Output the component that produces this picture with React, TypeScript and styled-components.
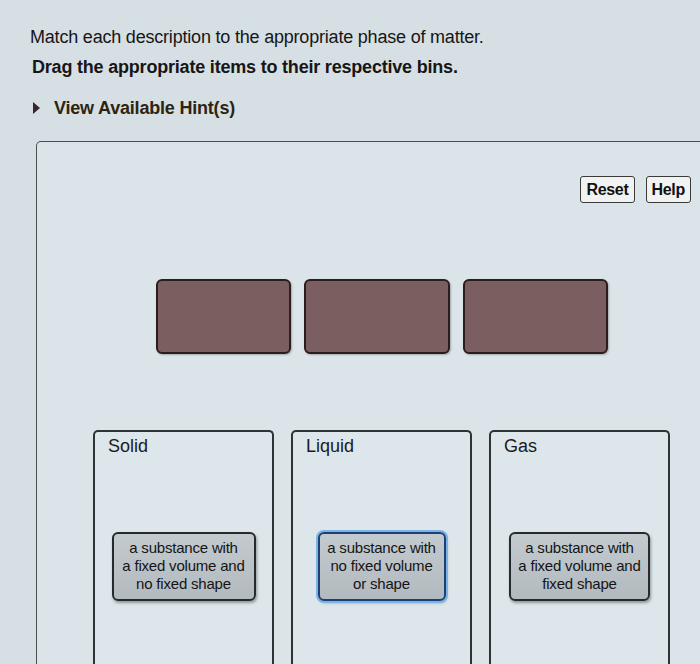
import React from "react";
import styled, { createGlobalStyle } from "styled-components";

const Global = createGlobalStyle`
  html, body { margin: 0; padding: 0; }
  body {
    width: 700px;
    height: 664px;
    overflow: hidden;
    background: #d6dfe3;
    font-family: "Liberation Sans", Arial, Helvetica, sans-serif;
    color: #161616;
  }
`;

const Page = styled.div`
  padding: 26px 0 0 30px;
  height: 664px;
  box-sizing: border-box;
  display: flex;
  flex-direction: column;
`;

const Instruction = styled.p<{ $bold?: boolean }>`
  margin: 0 0 ${(p) => (p.$bold ? "19px" : "8px")} ${(p) => (p.$bold ? "2px" : "0")};
  font-size: 18px;
  line-height: 22px;
  font-weight: ${(p) => (p.$bold ? 700 : 400)};
  letter-spacing: -0.2px;
`;

const HintToggle = styled.div`
  display: flex;
  align-items: center;
  gap: 14px;
  margin-left: 3px;
  font-size: 18px;
  line-height: 22px;
  font-weight: 700;
  color: #2e2410;
  letter-spacing: -0.2px;
`;

const Triangle = styled.span`
  width: 0;
  height: 0;
  border-top: 6px solid transparent;
  border-bottom: 6px solid transparent;
  border-left: 7px solid #3b2430;
`;

const Panel = styled.div`
  margin: 22px 0 0 6px;
  width: 690px;
  flex: 1;
  box-sizing: border-box;
  border: 1px solid #4a4f52;
  border-bottom: none;
  border-radius: 5px 5px 0 0;
  background: #dbe4e8;
  padding: 34px 34px 0 56px;
  display: flex;
  flex-direction: column;
`;

const Toolbar = styled.div`
  display: flex;
  justify-content: flex-end;
  gap: 11px;
`;

const ToolButton = styled.button`
  height: 27px;
  padding: 0 5px;
  border: 1px solid #3a3a3a;
  border-radius: 3px;
  background: #f1f3f3;
  font-family: "Liberation Sans", Arial, sans-serif;
  font-size: 16px;
  font-weight: 700;
  color: #111;
  letter-spacing: -0.3px;
`;

const TargetRow = styled.div`
  display: flex;
  gap: 13px;
  margin: 76px 0 0 63px;
`;

const Target = styled.div<{ $w: number }>`
  width: ${(p) => p.$w}px;
  height: 75px;
  box-sizing: border-box;
  background: #7b5e60;
  border: 2px solid #2b1c1e;
  border-radius: 6px;
  box-shadow: 1px 1px 2px rgba(0, 0, 0, 0.25);
`;

const BinRow = styled.div`
  display: flex;
  gap: 17px;
  margin-top: 76px;
  flex: 1;
`;

const Bin = styled.div`
  width: 181px;
  box-sizing: border-box;
  border: 2px solid #2f3335;
  border-bottom: none;
  border-radius: 5px 5px 0 0;
  background: #dde6ea;
  display: flex;
  flex-direction: column;
  align-items: center;
`;

const BinLabel = styled.div`
  align-self: flex-start;
  margin: 3px 0 0 13px;
  font-size: 18px;
  line-height: 22px;
  color: #1a1a1a;
`;

const Card = styled.div<{ $active?: boolean; $w: number }>`
  margin-top: 75px;
  width: ${(p) => p.$w}px;
  box-sizing: border-box;
  padding: 5px 3px 6px;
  border: 2px solid ${(p) => (p.$active ? "#1d3f73" : "#262a2c")};
  border-radius: 6px;
  background: linear-gradient(#c4cbcf, #b2babf);
  box-shadow: ${(p) =>
    p.$active
      ? "0 0 0 2px #79b4e4, 1px 2px 3px rgba(0,0,0,0.3)"
      : "1px 2px 3px rgba(0,0,0,0.35)"};
  text-align: center;
  font-size: 15px;
  line-height: 18px;
  color: #141414;
  letter-spacing: -0.2px;
`;

const bins = [
  {
    label: "Solid",
    card: ["a substance with", "a fixed volume and", "no fixed shape"],
    w: 144,
    active: false,
  },
  {
    label: "Liquid",
    card: ["a substance with", "no fixed volume", "or shape"],
    w: 128,
    active: true,
  },
  {
    label: "Gas",
    card: ["a substance with", "a fixed volume and", "fixed shape"],
    w: 141,
    active: false,
  },
];

export default function App() {
  return (
    <>
      <Global />
      <Page>
        <Instruction>Match each description to the appropriate phase of matter.</Instruction>
        <Instruction $bold>Drag the appropriate items to their respective bins.</Instruction>
        <HintToggle>
          <Triangle />
          View Available Hint(s)
        </HintToggle>
        <Panel>
          <Toolbar>
            <ToolButton>Reset</ToolButton>
            <ToolButton>Help</ToolButton>
          </Toolbar>
          <TargetRow>
            <Target $w={135} />
            <Target $w={146} />
            <Target $w={145} />
          </TargetRow>
          <BinRow>
            {bins.map((b) => (
              <Bin key={b.label}>
                <BinLabel>{b.label}</BinLabel>
                <Card $w={b.w} $active={b.active}>
                  {b.card.map((l) => (
                    <div key={l}>{l}</div>
                  ))}
                </Card>
              </Bin>
            ))}
          </BinRow>
        </Panel>
      </Page>
    </>
  );
}
